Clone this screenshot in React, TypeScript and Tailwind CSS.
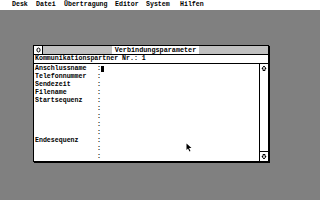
import React from "react";

const rows = [
  "Anschlussname",
  "Telefonnummer",
  "Sendezeit",
  "Filename",
  "Startsequenz",
  "",
  "",
  "",
  "",
  "Endesequenz",
  "",
  "",
];

const menu = [
  { label: "Desk", w: "w-[24px]" },
  { label: "Datei", w: "w-[28px]" },
  { label: "Übertragung", w: "w-[51px]" },
  { label: "Editor", w: "w-[31px]" },
  { label: "System", w: "w-[34px]" },
  { label: "Hilfen", w: "w-[30px]" },
];

const ArrowBox = ({ up }: { up: boolean }) => (
  <div className="h-[9px] w-[8px] flex items-center justify-center bg-white">
    <svg width="6" height="7" viewBox="0 0 6 7">
      {up ? (
        <path d="M3 1 L5 3.5 L4 3.5 L4 5.5 L2 5.5 L2 3.5 L1 3.5 Z" fill="none" stroke="black" strokeWidth="1" />
      ) : (
        <path d="M3 6 L5 3.5 L4 3.5 L4 1.5 L2 1.5 L2 3.5 L1 3.5 Z" fill="none" stroke="black" strokeWidth="1" />
      )}
    </svg>
  </div>
);

export default function App() {
  return (
    <div
      className="w-[320px] h-[200px] bg-[#808080] flex flex-col relative overflow-hidden"
      style={{ fontFamily: '"Liberation Mono", "DejaVu Sans Mono", monospace' }}
    >
      {/* Menu bar */}
      <div className="h-[10px] bg-white flex items-center pl-[12px] text-[6.6px] leading-none font-bold text-black">
        {menu.map((m) => (
          <span key={m.label} className={`${m.w} shrink-0`}>
            {m.label}
          </span>
        ))}
      </div>

      {/* Window */}
      <div className="ml-[33px] mt-[35px] w-[236px] h-[117px] flex">
        <div className="flex-1 flex flex-col bg-white border border-black shadow-[1px_1px_0_0_#000]">
          {/* Title row */}
          <div className="h-[9px] flex border-b border-black">
            <div className="w-[9px] border-r border-black flex items-center justify-center">
              <svg width="5" height="6" viewBox="0 0 5 6">
                <ellipse cx="2.5" cy="3" rx="1.6" ry="2" fill="none" stroke="black" strokeWidth="1" />
              </svg>
            </div>
            <div className="flex-1 bg-[#c0c0c0] flex justify-center">
              <div className="bg-white px-[3px] text-[6.8px] leading-[8px] font-bold text-black">
                Verbindungsparameter
              </div>
            </div>
          </div>
          {/* Info line */}
          <div className="h-[9px] border-b border-black pl-[1px] text-[6.6px] leading-[8px] font-bold text-black">
            Kommunikationspartner Nr.: 1
          </div>
          {/* Work area */}
          <div className="flex-1 flex">
            <div className="flex-1 pl-[1px] pt-[1px] text-[6.6px] leading-[8px] font-bold text-black">
              {rows.map((r, i) => (
                <div key={i} className="flex h-[8px]">
                  <span className="w-[62px] shrink-0">{r}</span>
                  <span className="w-[4px]">:</span>
                  {i === 0 && <span className="mt-[1px] w-[3px] h-[6px] bg-black" />}
                </div>
              ))}
            </div>
            <div className="w-[9px] border-l border-black flex flex-col justify-between">
              <ArrowBox up />
              <div className="border-t border-black">
                <ArrowBox up={false} />
              </div>
            </div>
          </div>
        </div>
      </div>

      {/* Mouse pointer */}
      <svg className="absolute left-[186px] top-[143px]" width="6" height="9" viewBox="0 0 6 9">
        <path d="M0.5 0.5 L0.5 7 L2 5.5 L3.5 8.5 L4.5 8 L3 5 L5.5 5 Z" fill="black" />
      </svg>
    </div>
  );
}
